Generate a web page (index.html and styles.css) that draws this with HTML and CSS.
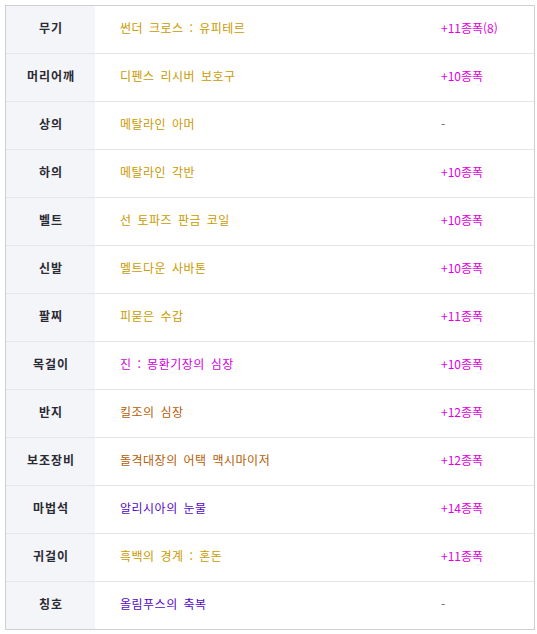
FILE: index.html
```html
<!DOCTYPE html>
<html lang="ko">
<head>
<meta charset="utf-8">
<link rel="stylesheet" href="styles.css">
</head>
<body>
<div class="table">
  <div class="row"><div class="head">무기</div><div class="item gold">썬더 크로스 : 유피테르</div><div class="star">+11종폭(8)</div></div>
  <div class="row"><div class="head">머리어깨</div><div class="item gold">디펜스 리시버 보호구</div><div class="star">+10종폭</div></div>
  <div class="row"><div class="head">상의</div><div class="item gold">메탈라인 아머</div><div class="star none">-</div></div>
  <div class="row"><div class="head">하의</div><div class="item gold">메탈라인 각반</div><div class="star">+10종폭</div></div>
  <div class="row"><div class="head">벨트</div><div class="item gold">선 토파즈 판금 코일</div><div class="star">+10종폭</div></div>
  <div class="row"><div class="head">신발</div><div class="item gold">멜트다운 사바톤</div><div class="star">+10종폭</div></div>
  <div class="row"><div class="head">팔찌</div><div class="item gold">피묻은 수갑</div><div class="star">+11종폭</div></div>
  <div class="row"><div class="head">목걸이</div><div class="item magenta">진 : 몽환기장의 심장</div><div class="star">+10종폭</div></div>
  <div class="row"><div class="head">반지</div><div class="item brown">킬조의 심장</div><div class="star">+12종폭</div></div>
  <div class="row"><div class="head">보조장비</div><div class="item brown">돌격대장의 어택 맥시마이저</div><div class="star">+12종폭</div></div>
  <div class="row"><div class="head">마법석</div><div class="item purple">알리시아의 눈물</div><div class="star">+14종폭</div></div>
  <div class="row"><div class="head">귀걸이</div><div class="item gold">흑백의 경계 : 혼돈</div><div class="star">+11종폭</div></div>
  <div class="row"><div class="head">칭호</div><div class="item purple">올림푸스의 축복</div><div class="star none">-</div></div>
</div>
</body>
</html>
```
FILE: styles.css
```css
html, body {
  margin: 0;
  background: #ffffff;
}
body {
  padding: 5px;
  font-family: "Noto Sans CJK KR", "Noto Sans", sans-serif;
  font-size: 12px;
}
.table {
  width: 528px;
  border: 1px solid #cfd0d6;
  display: flex;
  flex-direction: column;
}
.row {
  display: grid;
  grid-template-columns: 89px 1fr 117px;
  height: 47px;
  border-top: 1px solid #e6e6ea;
  align-items: stretch;
}
.row:first-child {
  border-top: none;
}
.head, .item, .star {
  display: flex;
  align-items: center;
  line-height: 1;
  white-space: nowrap;
  padding-bottom: 3px;
}
.head {
  background: #f4f5f9;
  justify-content: center;
  font-weight: bold;
  color: #2a2a33;
  letter-spacing: 1px;
  padding-left: 1px;
}
.item {
  padding-left: 25px;
  letter-spacing: 0.5px;
  word-spacing: 2px;
}
.star {
  padding-left: 24px;
  color: #e000e0;
}
.star.none {
  color: #666677;
}
.gold { color: #c99a00; }
.brown { color: #b65c06; }
.magenta { color: #d000d8; }
.purple { color: #5208c8; }
```
